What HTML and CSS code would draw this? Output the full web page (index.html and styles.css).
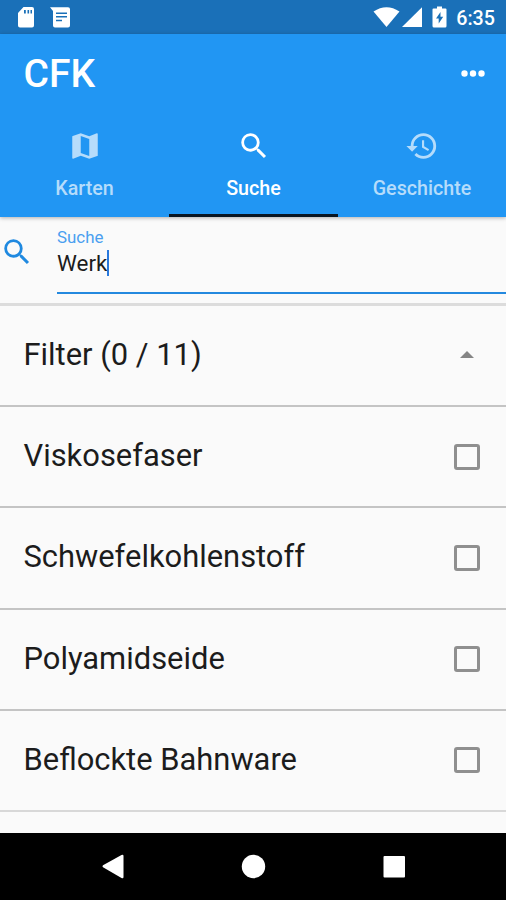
FILE: index.html
```html
<!DOCTYPE html>
<html lang="de">
<head>
<meta charset="utf-8">
<title>CFK</title>
<link rel="stylesheet" href="styles.css">
</head>
<body>
<div class="status">
  <svg class="status-left" width="60" height="34" viewBox="0 0 60 34" fill="#fff">
    <path fill-rule="evenodd" d="M6.500 7h8.500q2 0 2 2v16.500q0 2-2 2H3q-2 0-2-2V13zM7 10v3.500h1.800V10zM10.500 10v3.500h1.600V10zM13.500 10v3.500h1.500V10z"/>
    <path fill-rule="evenodd" d="M33 7.300h18q2 0 2 2v16.200q0 2-2 2H38q-2 0-2-2V11zM39 12.500v1.500h11v-1.500zM39 16v1.500h11v-1.500zM39 19.700v1.500h6v-1.500z"/>
  </svg>
  <svg class="status-right" width="80" height="34" viewBox="0 0 80 34" fill="#fff">
    <path d="M.500 11.500Q13.500 3 26.500 11.500L13.500 27z"/>
    <path d="M49 7.300V27H29z"/>
    <path fill-rule="evenodd" d="M64 6.500h5v2h3.500q1 0 1 1v16.500q0 1.500-1.300 1.500H61q-1.500 0-1.500-1.500V9.500q0-1 1-1H64zM67.500 12L63 18.500h2.700v5l4.500-6.800h-2.700z"/>
  </svg>
  <span class="time">6:35</span>
</div>
<header class="appbar">
  <div class="toolbar">
    <h1>CFK</h1>
    <svg width="26" height="10" viewBox="0 0 26 10" fill="#fff"><circle cx="4.500" cy="4.500" r="3.200"/><circle cx="13" cy="4.500" r="3.200"/><circle cx="21.500" cy="4.500" r="3.200"/></svg>
  </div>
  <nav class="tabs">
    <div class="tab">
      <svg class="icon" viewBox="0 0 24 24"><path d="M20.500 3l-.16.030L15 5.100 9 3 3.360 4.900c-.21.070-.36.250-.36.480V20.500c0 .280.220.500.500.500l.160-.030L9 18.900l6 2.100 5.640-1.900c.210-.070.360-.250.360-.480V3.500c0-.280-.220-.500-.500-.500zM15 19l-6-2.110V5l6 2.110V19z"/></svg>
      <span>Karten</span>
    </div>
    <div class="tab active">
      <svg class="icon" viewBox="0 0 24 24"><path d="M15.500 14h-.79l-.28-.27A6.470 6.470 0 0 0 16 9.500 6.500 6.500 0 1 0 9.500 16c1.610 0 3.090-.59 4.230-1.570l.27.280v.79l5 4.990L20.490 19l-4.990-5zm-6 0C7.010 14 5 11.990 5 9.500S7.010 5 9.500 5 14 7.010 14 9.500 11.990 14 9.500 14z"/></svg>
      <span>Suche</span>
    </div>
    <div class="tab">
      <svg class="icon" viewBox="0 0 24 24"><path d="M13 3a9 9 0 0 0-9 9H1l3.890 3.890.07.140L9 12H6c0-3.870 3.130-7 7-7s7 3.130 7 7-3.130 7-7 7c-1.930 0-3.680-.79-4.940-2.060l-1.420 1.420A8.954 8.954 0 0 0 13 21a9 9 0 0 0 0-18zm-1 5v5l4.280 2.540.72-1.210-3.500-2.080V8H12z"/></svg>
      <span>Geschichte</span>
    </div>
  </nav>
</header>
<main>
  <div class="search">
    <svg class="icon" viewBox="0 0 24 24"><path d="M15.500 14h-.79l-.28-.27A6.470 6.470 0 0 0 16 9.500 6.500 6.500 0 1 0 9.500 16c1.610 0 3.090-.59 4.230-1.570l.27.280v.79l5 4.990L20.490 19l-4.990-5zm-6 0C7.010 14 5 11.990 5 9.500S7.010 5 9.500 5 14 7.010 14 9.500 11.990 14 9.500 14z"/></svg>
    <div class="field">
      <label>Suche</label>
      <div class="value"><span>Werk</span><i class="caret"></i></div>
    </div>
  </div>
  <div class="row"><span>Filter (0 / 11)</span><i class="arrow"></i></div>
  <div class="row"><span>Viskosefaser</span><i class="box"></i></div>
  <div class="row"><span>Schwefelkohlenstoff</span><i class="box"></i></div>
  <div class="row"><span>Polyamidseide</span><i class="box"></i></div>
  <div class="row last"><span>Beflockte Bahnware</span><i class="box"></i></div>
</main>
<footer class="navbar">
  <svg width="506" height="67" viewBox="0 0 506 67" fill="#fff"><path d="M103 32.200L121.500 22q2-.8 2 1v21q0 1.800-2 1L103 34.200q-1.200-1 0-2z"/><circle cx="253.500" cy="33.500" r="11.700"/><rect x="383.500" y="23" width="21.500" height="21.500" rx="1"/></svg>
</footer>
</body>
</html>
```
FILE: styles.css
```css
* { box-sizing: border-box; }
body {
  margin: 0;
  width: 506px;
  height: 900px;
  overflow: hidden;
  display: flex;
  flex-direction: column;
  background: #fafafa;
  color: #1c1c1c;
  font-family: Roboto, "Liberation Sans", sans-serif;
}
svg { display: block; flex: none; }
.status {
  height: 34px;
  flex: none;
  display: flex;
  align-items: center;
  padding: 0 11px 0 17px;
  background: #1a70b8;
  color: #fff;
}
.status-right { margin-left: auto; }
.time {
  width: 42px;
  text-align: right;
  font-size: 19.7px;
  line-height: 34px;
  font-weight: 500;
  padding-top: 3px;
}
.appbar {
  height: 183px;
  flex: none;
  background: #2196f3;
  color: #fff;
  box-shadow: 0 1px 4px rgba(0, 0, 0, .3);
  position: relative;
}
.toolbar {
  height: 79px;
  display: flex;
  align-items: center;
  justify-content: space-between;
  padding: 0 20px 0 23.5px;
}
h1 { margin: 0; font-size: 39px; line-height: 46px; font-weight: 500; }
.tabs { display: grid; grid-template-columns: 169px 169px 168px; height: 104px; }
.tab {
  display: flex;
  flex-direction: column;
  align-items: center;
  padding-top: 15.5px;
  color: #b5dcfb;
  font-size: 19.7px;
  line-height: 24px;
  font-weight: 500;
}
.tab span { margin-top: 14px; }
.tab.active { color: #fff; border-bottom: 3px solid #091622; }
.icon { width: 34px; height: 34px; fill: currentColor; }
.search {
  height: 89px;
  display: flex;
  border-bottom: 3px solid #dcdcdc;
}
.search .icon { margin-top: 18px; color: #1f89e0; }
.field {
  flex: 1;
  height: 77px;
  margin-left: 23px;
  padding-top: 10px;
  border-bottom: 2px solid #2489df;
}
label { display: block; font-size: 16.9px; line-height: 21px; color: #4a9ff0; }
.value { display: flex; align-items: center; height: 30px; font-size: 22.4px; }
.caret { width: 2px; height: 26px; background: #2979dd; }
main { flex: 1; min-height: 0; }
.row {
  height: 101.2px;
  display: flex;
  align-items: center;
  justify-content: space-between;
  padding: 0 26px 2px 23.5px;
  border-bottom: 2px solid #c4c4c4;
  font-size: 30.9px;
}
.row.last { border-color: #d8d8d8; }
.box {
  width: 26px;
  height: 26px;
  margin-top: 2px;
  border: 3px solid #8f8f8f;
  border-radius: 3px;
}
.arrow {
  margin-right: 6px;
  border: solid transparent;
  border-width: 0 7px 7px;
  border-bottom-color: #858585;
}
.navbar { height: 67px; flex: none; background: #000; }
```
